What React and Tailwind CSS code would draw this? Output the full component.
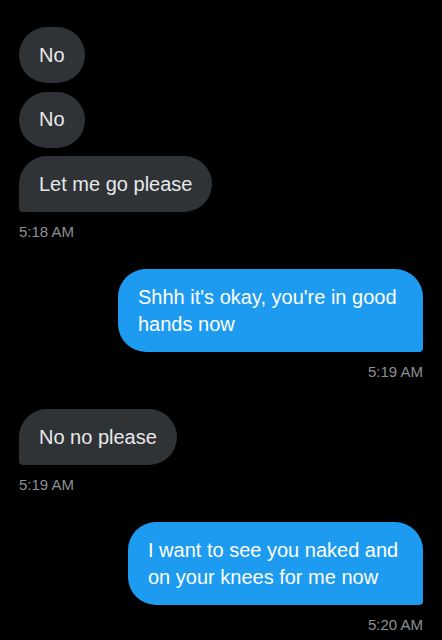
import React from "react";

const font = { fontFamily: '"Liberation Sans", Arial, sans-serif' };

function Recv({ children, last }) {
  return (
    <div
      className={`self-start bg-[#2f3336] text-[#e7e9ea] text-[20px] leading-[27px] px-[20px] py-[14.5px] rounded-[28px] ${last ? "rounded-bl-[4px]" : ""}`}
    >
      {children}
    </div>
  );
}

function Sent({ children }) {
  return (
    <div className="self-end bg-[#1d9bf0] text-white text-[20px] leading-[27px] pl-[20px] pr-[16px] pt-[14.5px] pb-[14.5px] rounded-[28px] rounded-br-[4px]">
      {children}
    </div>
  );
}

function Time({ children, right }) {
  return (
    <div className={`text-[15px] leading-[18px] text-[#8b9094] mt-[11px] ${right ? "self-end" : "self-start"}`}>
      {children}
    </div>
  );
}

export default function App() {
  return (
    <div className="w-[442px] h-[640px] bg-black overflow-hidden" style={font}>
      <div className="flex flex-col px-[19px] pt-[27px]">
        <div className="flex flex-col gap-[8.5px]">
          <Recv>No</Recv>
          <Recv>No</Recv>
          <Recv last>Let me go please</Recv>
        </div>
        <Time>5:18 AM</Time>

        <div className="mt-[28px] flex flex-col">
          <div className="self-end w-[305px]">
            <Sent>
              Shhh it's okay, you're in good
              <br />
              hands now
            </Sent>
          </div>
        </div>
        <Time right>5:19 AM</Time>

        <div className="mt-[28px] flex flex-col">
          <Recv last>No no please</Recv>
        </div>
        <Time>5:19 AM</Time>

        <div className="mt-[28px] flex flex-col">
          <div className="self-end w-[295px]">
            <Sent>
              I want to see you naked and
              <br />
              on your knees for me now
            </Sent>
          </div>
        </div>
        <Time right>5:20 AM</Time>
      </div>
    </div>
  );
}
